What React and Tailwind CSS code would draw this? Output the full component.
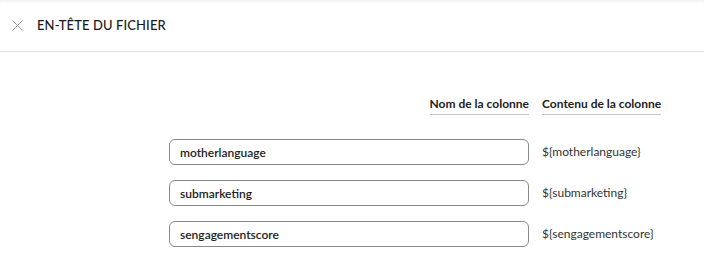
import { X } from 'lucide-react';

const rows = ['motherlanguage', 'submarketing', 'sengagementscore'];

const App = () => {
  return (
    <div className="w-[704px] h-[271px] bg-white overflow-hidden text-[#222]" style={{ fontFamily: 'Lato, "Open Sans", sans-serif' }}>
      <div className="h-[52px] flex items-center border-b border-[#e3e3e3] shadow-[inset_0_3px_3px_-1px_rgba(0,0,0,0.05)]">
        <X className="ml-[8px] w-[19px] h-[19px] text-[#8a8a8a]" strokeWidth={1.1} />
        <h1 className="ml-[10px] text-[13px] font-medium tracking-[0.1px] text-[#1a1a1a]">EN-TÊTE DU FICHIER</h1>
      </div>

      <div className="pl-[169px] pt-[44px] text-[12px] leading-[16px]">
        <div className="grid grid-cols-[360px_auto] gap-x-[13px]">
          <div className="flex justify-end">
            <span className="font-bold pb-[2px] border-b border-[#c4c4c4]">Nom de la colonne</span>
          </div>
          <div className="flex">
            <span className="font-bold pb-[2px] border-b border-[#c4c4c4]">Contenu de la colonne</span>
          </div>
        </div>

        <div className="mt-[24px] flex flex-col gap-[15px]">
          {rows.map((r) => (
            <div key={r} className="grid grid-cols-[360px_auto] gap-x-[13px] items-center">
              <input
                readOnly
                value={r}
                className="h-[26px] w-[360px] rounded-[6px] border border-[#8a8a8a] px-[10px] text-[12px] font-semibold text-[#222] outline-none"
                style={{ fontFamily: 'Lato, "Open Sans", sans-serif' }}
              />
              <span className="text-[#333]">{'${' + r + '}'}</span>
            </div>
          ))}
        </div>
      </div>
    </div>
  );
};

export default App;
